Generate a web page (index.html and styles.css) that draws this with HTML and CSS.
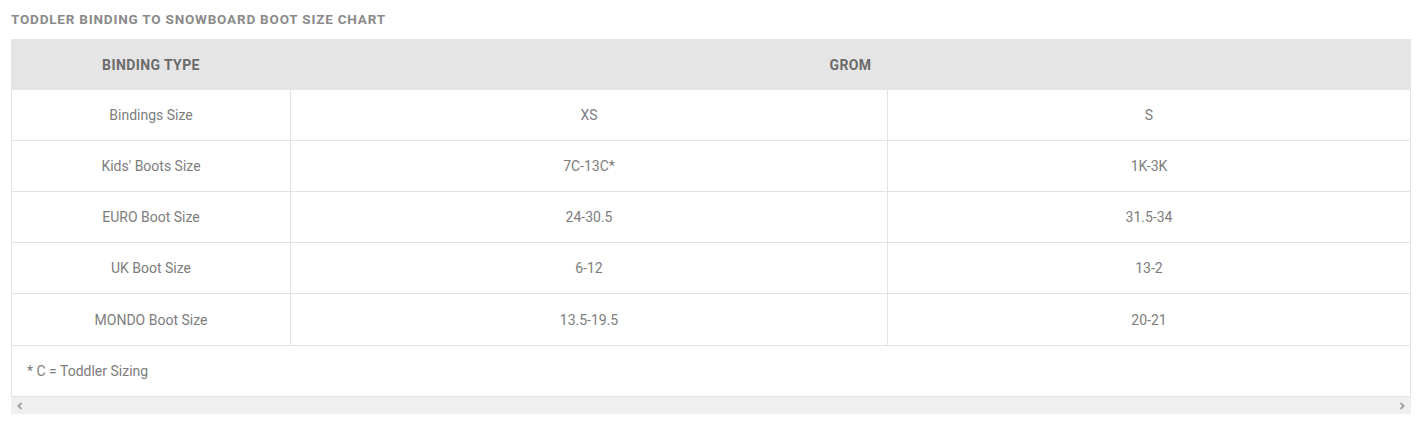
FILE: index.html
```html
<!DOCTYPE html>
<html>
<head>
<meta charset="utf-8">
<link rel="stylesheet" href="styles.css">
</head>
<body>
<div class="wrap">
  <h2 class="title">TODDLER BINDING TO SNOWBOARD BOOT SIZE CHART</h2>
  <div class="scroller">
    <table class="chart">
      <colgroup>
        <col class="c1"><col class="c2"><col class="c3">
      </colgroup>
      <thead>
        <tr><th>BINDING TYPE</th><th colspan="2">GROM</th></tr>
      </thead>
      <tbody>
        <tr><td>Bindings Size</td><td>XS</td><td>S</td></tr>
        <tr><td>Kids' Boots Size</td><td>7C-13C*</td><td>1K-3K</td></tr>
        <tr><td>EURO Boot Size</td><td>24-30.5</td><td>31.5-34</td></tr>
        <tr><td>UK Boot Size</td><td>6-12</td><td>13-2</td></tr>
        <tr class="tall"><td>MONDO Boot Size</td><td>13.5-19.5</td><td>20-21</td></tr>
        <tr><td colspan="3" class="note">* C = Toddler Sizing</td></tr>
      </tbody>
    </table>
    <div class="hbar">
      <svg class="arr" width="8" height="8" viewBox="0 0 8 8"><path d="M5.5 1 L2.5 4 L5.5 7" fill="none" stroke="#a3a3a3" stroke-width="2"/></svg>
      <svg class="arr" width="8" height="8" viewBox="0 0 8 8"><path d="M2.5 1 L5.5 4 L2.5 7" fill="none" stroke="#a3a3a3" stroke-width="2"/></svg>
    </div>
  </div>
</div>
</body>
</html>
```
FILE: styles.css
```css
html, body { margin: 0; padding: 0; background: #fff; }
body { font-family: Roboto, "Liberation Sans", sans-serif; color: #7a7a7a; }
.wrap { padding: 11px 14px 0 11px; }
.title {
  margin: 0 0 11px 0;
  font-size: 13.5px;
  font-weight: 700;
  letter-spacing: 0.8px;
  color: #8a8a8a;
  line-height: 17px;
}
.scroller { width: 1400px; }
.chart {
  width: 1400px;
  border-collapse: collapse;
  table-layout: fixed;
  font-size: 14px;
}
.c1 { width: 279px; }
.c2 { width: 597px; }
.chart th {
  background: #e5e5e5;
  height: 49px;
  padding: 0;
  font-weight: 700;
  letter-spacing: 0.4px;
  color: #6b6b6b;
  text-align: center;
  border: 1px solid #e5e5e5;
}
.chart td {
  height: 50px;
  padding: 0;
  text-align: center;
  border: 1px solid #e3e3e3;
  color: #7d7d7d;
}
.chart tr.tall td { height: 51px; }
.chart td.note { text-align: left; padding-left: 15px; }
.hbar {
  height: 17px;
  background: #f0f0f0;
  display: flex;
  justify-content: space-between;
  align-items: center;
  padding: 0 5px;
}
.arr { display: block; }
```
